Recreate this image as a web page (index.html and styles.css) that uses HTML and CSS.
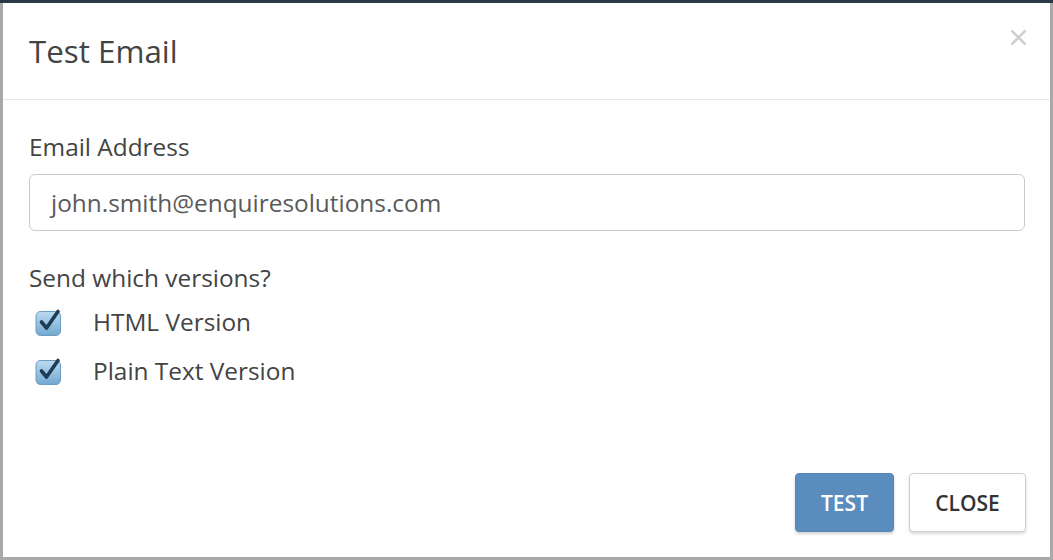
FILE: index.html
```html
<!DOCTYPE html>
<html>
<head>
<meta charset="utf-8">
<link rel="stylesheet" href="styles.css">
</head>
<body>
<div class="modal">
  <div class="modal-header">
    <h4 class="modal-title">Test Email</h4>
    <button class="close" aria-label="Close">
      <svg width="17" height="17" viewBox="0 0 17 17"><path d="M1.5 1.5 L15.5 15.5 M15.5 1.5 L1.5 15.5" stroke="#cfcfcf" stroke-width="2.6" fill="none"/></svg>
    </button>
  </div>
  <div class="modal-body">
    <label class="field-label">Email Address</label>
    <div class="input">john.smith@enquiresolutions.com</div>
    <div class="field-label versions">Send which versions?</div>
    <div class="check-row">
      <svg class="cb" width="27" height="28" viewBox="0 0 27 28">
        <defs>
          <linearGradient id="g1" x1="0" y1="0" x2="0" y2="1">
            <stop offset="0" stop-color="#bddbf0"/>
            <stop offset="1" stop-color="#72a8d0"/>
          </linearGradient>
        </defs>
        <rect x="1" y="3.5" width="24.5" height="24" rx="4.5" fill="url(#g1)" stroke="#6b9dc2" stroke-width="1"/>
        <path d="M6.5 14 L11.5 20 L23 3.5" stroke="#1d3c58" stroke-width="3.6" fill="none" stroke-linecap="round" stroke-linejoin="round"/>
      </svg>
      <span>HTML Version</span>
    </div>
    <div class="check-row">
      <svg class="cb" width="27" height="28" viewBox="0 0 27 28">
        <rect x="1" y="3.5" width="24.5" height="24" rx="4.5" fill="url(#g1)" stroke="#6b9dc2" stroke-width="1"/>
        <path d="M6.5 14 L11.5 20 L23 3.5" stroke="#1d3c58" stroke-width="3.6" fill="none" stroke-linecap="round" stroke-linejoin="round"/>
      </svg>
      <span>Plain Text Version</span>
    </div>
  </div>
  <div class="modal-footer">
    <button class="btn btn-primary">TEST</button>
    <button class="btn btn-default">CLOSE</button>
  </div>
</div>
</body>
</html>
```
FILE: styles.css
```css
html, body {
  margin: 0;
  padding: 0;
  height: 100%;
}
body {
  background: linear-gradient(#2c3845 0, #2c3845 3px, #a9a9a9 3px);
  font-family: "Open Sans", "Noto Sans", sans-serif;
  color: #444;
  overflow: hidden;
}
.modal {
  margin: 3px 0 0 3px;
  width: 1047px;
  height: 554px;
  background: #fff;
  display: flex;
  flex-direction: column;
  box-sizing: border-box;
}
.modal-header {
  height: 97px;
  box-sizing: border-box;
  border-bottom: 1px solid #e8e8e8;
  display: flex;
  align-items: center;
  justify-content: space-between;
  padding: 0 23px 0 26px;
}
.modal-title {
  margin: 0;
  font-size: 31.3px;
  font-weight: 400;
  color: #444;
  line-height: 40px;
}
.close {
  border: 0;
  background: none;
  padding: 0;
  margin: 0;
  align-self: flex-start;
  margin-top: 26px;
  display: block;
  line-height: 0;
}
.modal-body {
  padding: 32px 25px 0 26px;
  display: flex;
  flex-direction: column;
}
.field-label {
  font-size: 24.4px;
  line-height: 30px;
  color: #444;
}
.input {
  margin-top: 12px;
  height: 57px;
  box-sizing: border-box;
  border: 1.5px solid #cbcbcb;
  border-radius: 6px;
  padding: 0 21px;
  display: flex;
  align-items: center;
  font-size: 24.4px;
  color: #5a5a5a;
}
.versions {
  margin-top: 32px;
}
.check-row {
  height: 49px;
  display: flex;
  align-items: center;
  font-size: 24.4px;
  color: #444;
  padding-left: 6px;
}
.versions + .check-row {
  margin-top: 4px;
}
.cb {
  margin-right: 31px;
}
.modal-footer {
  margin-top: auto;
  padding: 0 24px 25px 0;
  display: flex;
  justify-content: flex-end;
  gap: 15px;
}
.btn {
  height: 59px;
  box-sizing: border-box;
  font-family: "Open Sans", "Noto Sans", sans-serif;
  font-size: 21px;
  font-weight: 600;
  border-radius: 4px;
  padding: 0;
  cursor: pointer;
}
.btn-primary {
  width: 99px;
  background: #5a8dbe;
  border: 1px solid #5487b8;
  color: #fff;
  box-shadow: 0 2px 3px rgba(0,0,0,0.18);
}
.btn-default {
  width: 117px;
  background: #fff;
  border: 1.5px solid #cfcfcf;
  color: #333;
  box-shadow: 0 2px 3px rgba(0,0,0,0.15);
}
```
